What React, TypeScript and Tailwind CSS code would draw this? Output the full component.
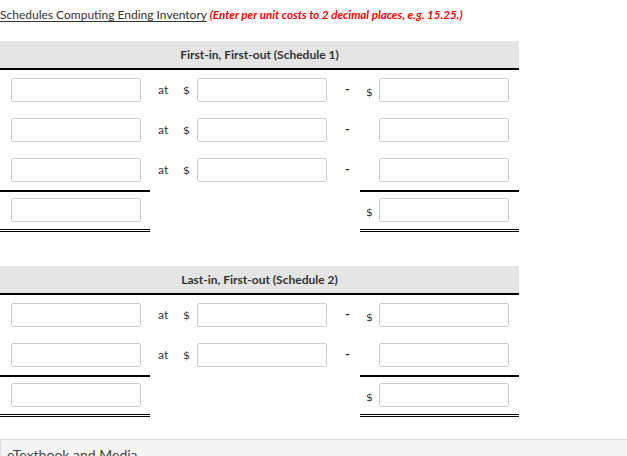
type Row = { dollarRight?: boolean; last?: boolean };

function Field() {
  return <div className="h-[24px] w-[130px] shrink-0 rounded-[2px] border border-[#cccccc] bg-white" />;
}

function Dollar({ className = '' }: { className?: string }) {
  return (
    <span className={`font-['DejaVu_Sans',sans-serif] text-[11px] leading-none text-[#333] ${className}`}>$</span>
  );
}

function ScheduleRow({ dollarRight, last }: Row) {
  const line = last ? 'border-b-[2px] border-black' : '';
  return (
    <div className="flex items-start">
      <div className={`w-[150px] shrink-0 pt-[8px] pb-[8px] pl-[11px] ${line}`}>
        <Field />
      </div>
      <div className="flex h-[40px] w-[47px] shrink-0 items-center">
        <span className="ml-[8px] w-[25px] text-[12px] text-[#333]">at</span>
        <Dollar />
      </div>
      <div className="flex h-[40px] items-center">
        <Field />
      </div>
      <div className="flex h-[40px] w-[33px] shrink-0 items-center">
        <span className="ml-[18px] text-[13px] font-bold text-[#333]">-</span>
      </div>
      <div className={`flex w-[159px] shrink-0 items-center pt-[8px] pb-[8px] ${line}`}>
        <span className="w-[19px] pl-[6px]">{dollarRight && <Dollar />}</span>
        <Field />
      </div>
    </div>
  );
}

function TotalRow() {
  return (
    <div className="flex items-start">
      <div className="w-[150px] shrink-0 border-b-[3px] border-double border-black pt-[6px] pb-[7px] pl-[11px]">
        <Field />
      </div>
      <div className="w-[210px] shrink-0" />
      <div className="flex w-[159px] shrink-0 items-center border-b-[3px] border-double border-black pt-[6px] pb-[7px]">
        <span className="w-[19px] pl-[6px]">
          <Dollar />
        </span>
        <Field />
      </div>
    </div>
  );
}

function Schedule({ title, rows }: { title: string; rows: Row[] }) {
  return (
    <div className="w-[519px]">
      <div className="flex h-[29px] items-center justify-center border-b-[2px] border-black bg-[#e5e5e5] text-[12px] font-bold text-[#333]">
        {title}
      </div>
      {rows.map((r, i) => (
        <ScheduleRow key={i} dollarRight={r.dollarRight} last={i === rows.length - 1} />
      ))}
      <TotalRow />
    </div>
  );
}

export default function App() {
  return (
    <div className="h-[456px] w-[627px] overflow-hidden bg-white font-['Lato',sans-serif] text-[#333]">
      <div className="h-[41px] pt-[7px] text-[12px] leading-4">
        <span className="underline underline-offset-[2px]">Schedules Computing Ending Inventory</span>{' '}
        <span className="text-[11.6px] font-bold italic text-[#ff0000]">
          (Enter per unit costs to 2 decimal places, e.g. 15.25.)
        </span>
      </div>

      <Schedule title="First-in, First-out (Schedule 1)" rows={[{ dollarRight: true }, {}, {}]} />

      <div className="h-[34px]" />

      <Schedule title="Last-in, First-out (Schedule 2)" rows={[{ dollarRight: true }, {}]} />

      <div className="mt-[22px] h-[40px] w-[640px] border border-[#dddddd] bg-[#f5f5f5] pt-[4px] pl-[6px] text-[14px] text-[#444]">
        eTextbook and Media
      </div>
    </div>
  );
}
